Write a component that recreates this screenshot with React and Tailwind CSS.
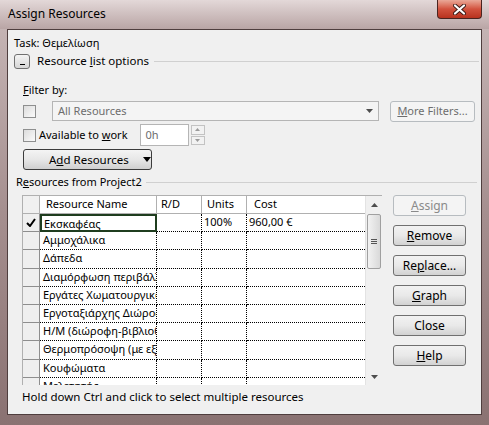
import React from 'react';

const font = { fontFamily: '"Noto Sans", "Open Sans", sans-serif' };

const rows = [
  { name: 'Εκσκαφέας', units: '100%', cost: '960,00 €', assigned: true },
  { name: 'Αμμοχάλικα' },
  { name: 'Δάπεδα' },
  { name: 'Διαμόρφωση περιβάλλοντος' },
  { name: 'Εργάτες Χωματουργικών' },
  { name: 'Εργοταξιάρχης Διώροφης' },
  { name: 'Η/Μ (διώροφη-βιβλιοθήκη)' },
  { name: 'Θερμοπρόσοψη (με εξωτερική)' },
  { name: 'Κουφώματα' },
  { name: 'Μελετητής' },
];

const Check = () => (
  <span className="inline-block w-[13px] h-[13px] border border-[#8e8f8f] bg-gradient-to-br from-[#dcdcdc] to-[#fbfbfb] shrink-0" />
);

const WinButton = ({ children, disabled, className = '' }) => (
  <div
    className={`h-[21px] flex items-center justify-center rounded-[3px] border whitespace-nowrap ${
      disabled
        ? 'border-[#b7bcc0] bg-[#f4f4f4] text-[#8a8a8a]'
        : 'border-[#707070] bg-gradient-to-b from-[#f2f2f2] via-[#e9e9e9] to-[#d2d2d2] text-black'
    } ${className}`}
  >
    {children}
  </div>
);

const SortArrow = ({ down }) => (
  <svg width="7" height="4" viewBox="0 0 7 4">
    {down ? <path d="M0 0h7L3.5 4z" fill="#4d4d4d" /> : <path d="M0 4h7L3.5 0z" fill="#4d4d4d" />}
  </svg>
);

export default function App() {
  return (
    <div
      style={font}
      className="w-[489px] h-[425px] flex flex-col bg-gradient-to-b from-[#c9b9b9] via-[#a58f8f] to-[#8a7272] text-black overflow-hidden"
    >
      {/* title bar */}
      <div className="relative h-[29px] shrink-0 bg-gradient-to-b from-[#e3d8d8] to-[#b9a5a5]">
        <span className="absolute left-[8px] top-[6px] text-[12px] leading-[16px] text-black">Assign Resources</span>
        <div className="absolute left-[437px] top-0 w-[45px] h-[19px] rounded-b-[4px] border border-t-0 border-[#4a2420] bg-gradient-to-b from-[#e9a898] via-[#d2523e] to-[#b8321e] flex items-center justify-center">
          <svg width="13" height="11" viewBox="0 0 13 11">
            <path d="M2 1.5l9 8M11 1.5l-9 8" stroke="#3a1a16" strokeWidth="4" strokeLinecap="round" />
            <path d="M2 1.5l9 8M11 1.5l-9 8" stroke="#ffffff" strokeWidth="2.2" strokeLinecap="round" />
          </svg>
        </div>
      </div>

      {/* client area */}
      <div className="mx-[7px] h-[386px] border border-[#4f3e3e] bg-[#f0f0f0] flex flex-col text-[11px] leading-[16px]">
        <div className="mt-[5px] ml-[6px]">Task: Θεμελίωση</div>
        <div className="mt-[2px] ml-[6px] flex items-center h-[16px]">
          <div className="w-[16px] h-[15px] border border-[#707070] rounded-[3px] bg-gradient-to-b from-[#f4f4f4] to-[#d6d6d6] flex items-end justify-center pb-[3px]">
            <span className="block w-[5px] h-[1px] bg-black" />
          </div>
          <span className="ml-[7px] text-[11.5px]">
            Resource <span className="underline">l</span>ist options
          </span>
          <div className="ml-[5px] flex-1 h-px bg-[#d0d0d0] mr-[2px]" />
        </div>

        <div className="mt-[13px] ml-[15px]">
          <span className="underline">F</span>ilter by:
        </div>
        <div className="mt-[3px] ml-[15px] flex items-center h-[20px]">
          <Check />
          <div className="ml-[16px] w-[327px] h-[20px] border border-[#b5b5b5] bg-[#f4f4f4] flex items-center justify-between px-[5px] text-[#6d6d6d]">
            <span>All Resources</span>
            <SortArrow down />
          </div>
          <WinButton disabled className="ml-[11px] w-[85px] h-[20px]">
            <span className="text-[#6d6d6d]">
              <span className="underline">M</span>ore Filters...
            </span>
          </WinButton>
        </div>
        <div className="mt-[3px] ml-[15px] flex items-center h-[22px]">
          <Check />
          <span className="ml-[3px]">
            Available to <span className="underline">w</span>ork
          </span>
          <div className="ml-[12px] w-[49px] h-[22px] border border-[#b5b5b5] bg-white flex items-center px-[5px] text-[#6d6d6d]">
            0h
          </div>
          <div className="ml-[2px] w-[14px] h-[20px] flex flex-col gap-px">
            <div className="flex-1 border border-[#c3c3c3] bg-[#f2f2f2] flex items-center justify-center">
              <svg width="5" height="3" viewBox="0 0 5 3"><path d="M0 3h5L2.5 0z" fill="#9a9a9a" /></svg>
            </div>
            <div className="flex-1 border border-[#c3c3c3] bg-[#f2f2f2] flex items-center justify-center">
              <svg width="5" height="3" viewBox="0 0 5 3"><path d="M0 0h5L2.5 3z" fill="#9a9a9a" /></svg>
            </div>
          </div>
        </div>
        <div className="mt-[3px] ml-[15px] w-[129px] h-[21px] rounded-[3px] border border-[#3c3c3c] bg-gradient-to-b from-[#f4f4f4] via-[#e7e7e7] to-[#cfcfcf] flex items-center whitespace-nowrap">
          <span className="ml-[25px] text-[11.5px]">
            A<span className="underline">d</span>d Resources
          </span>
          <svg className="ml-[14px]" width="8" height="5" viewBox="0 0 8 5"><path d="M0 0h8L4 5z" fill="#000" /></svg>
        </div>

        <div className="mt-[4px] ml-[8px] flex items-center h-[16px]">
          <span>
            R<span className="underline">e</span>sources from Project2
          </span>
          <div className="ml-[4px] flex-1 h-px bg-[#d0d0d0] mr-[4px]" />
        </div>

        <div className="mt-[5px] ml-[14px] flex">
          {/* resource grid */}
          <div className="w-[360px] h-[190px] flex border-l border-t border-[#b0b0b0] bg-white overflow-hidden">
            <div className="w-[343px] flex flex-col">
              <div className="h-[18px] flex shrink-0 border-b border-[#b0b0b0]">
                <div className="w-[17px] bg-[#f0f0f0] border-r border-[#b0b0b0]" />
                <div className="w-[117px] pl-[6px] border-r border-[#b0b0b0]">Resource Name</div>
                <div className="w-[45px] pl-[4px] border-r border-[#b0b0b0]">R/D</div>
                <div className="w-[45px] pl-[5px] border-r border-[#b0b0b0]">Units</div>
                <div className="flex-1 pl-[7px]">Cost</div>
              </div>
              {rows.map((r, i) => (
                <div key={i} className="h-[18.2px] flex shrink-0">
                  <div className="w-[17px] bg-[#efefef] border-r border-b border-[#8e8e8e] flex items-center justify-center">
                    {r.assigned && (
                      <svg width="10" height="9" viewBox="0 0 10 9">
                        <path d="M1 5l3 3 5-7" stroke="#000" strokeWidth="2" fill="none" />
                      </svg>
                    )}
                  </div>
                  <div
                    className={`w-[117px] whitespace-nowrap overflow-hidden text-clip ${
                      i === 0 ? 'border-2 border-[#1f3d1f] pl-[2px]' : 'pl-[3px] border-r border-b border-dotted border-black'
                    }`}
                  >
                    {r.name}
                  </div>
                  <div className="w-[45px] border-r border-b border-dotted border-black" />
                  <div className="w-[45px] pl-[2px] border-r border-b border-dotted border-black">{r.units}</div>
                  <div className="flex-1 pl-[2px] border-b border-dotted border-black">{r.cost}</div>
                </div>
              ))}
            </div>
            {/* scrollbar */}
            <div className="w-[17px] bg-[#f0f0f0] border-l border-[#e3e3e3] flex flex-col items-center">
              <div className="h-[18px] flex items-center justify-center">
                <SortArrow />
              </div>
              <div className="w-[14px] h-[55px] rounded-[2px] border border-[#a0a0a0] bg-gradient-to-r from-[#f2f2f2] to-[#d9d9d9] flex flex-col items-center justify-center gap-px">
                <span className="block w-[6px] h-px bg-[#555]" />
                <span className="block w-[6px] h-px bg-[#555]" />
                <span className="block w-[6px] h-px bg-[#555]" />
              </div>
              <div className="flex-1" />
              <div className="h-[17px] flex items-center justify-center">
                <SortArrow down />
              </div>
            </div>
          </div>

          {/* side buttons */}
          <div className="ml-[11px] w-[73px] flex flex-col gap-[9px] text-[12px]">
            <WinButton disabled>
              <span><span className="underline">A</span>ssign</span>
            </WinButton>
            <WinButton>
              <span><span className="underline">R</span>emove</span>
            </WinButton>
            <WinButton>
              <span>Re<span className="underline">p</span>lace...</span>
            </WinButton>
            <WinButton>
              <span><span className="underline">G</span>raph</span>
            </WinButton>
            <WinButton>
              <span>Close</span>
            </WinButton>
            <WinButton>
              <span><span className="underline">H</span>elp</span>
            </WinButton>
          </div>
        </div>

        <div className="mt-[4px] ml-[14px] text-[11.5px]">Hold down Ctrl and click to select multiple resources</div>
      </div>
    </div>
  );
}
